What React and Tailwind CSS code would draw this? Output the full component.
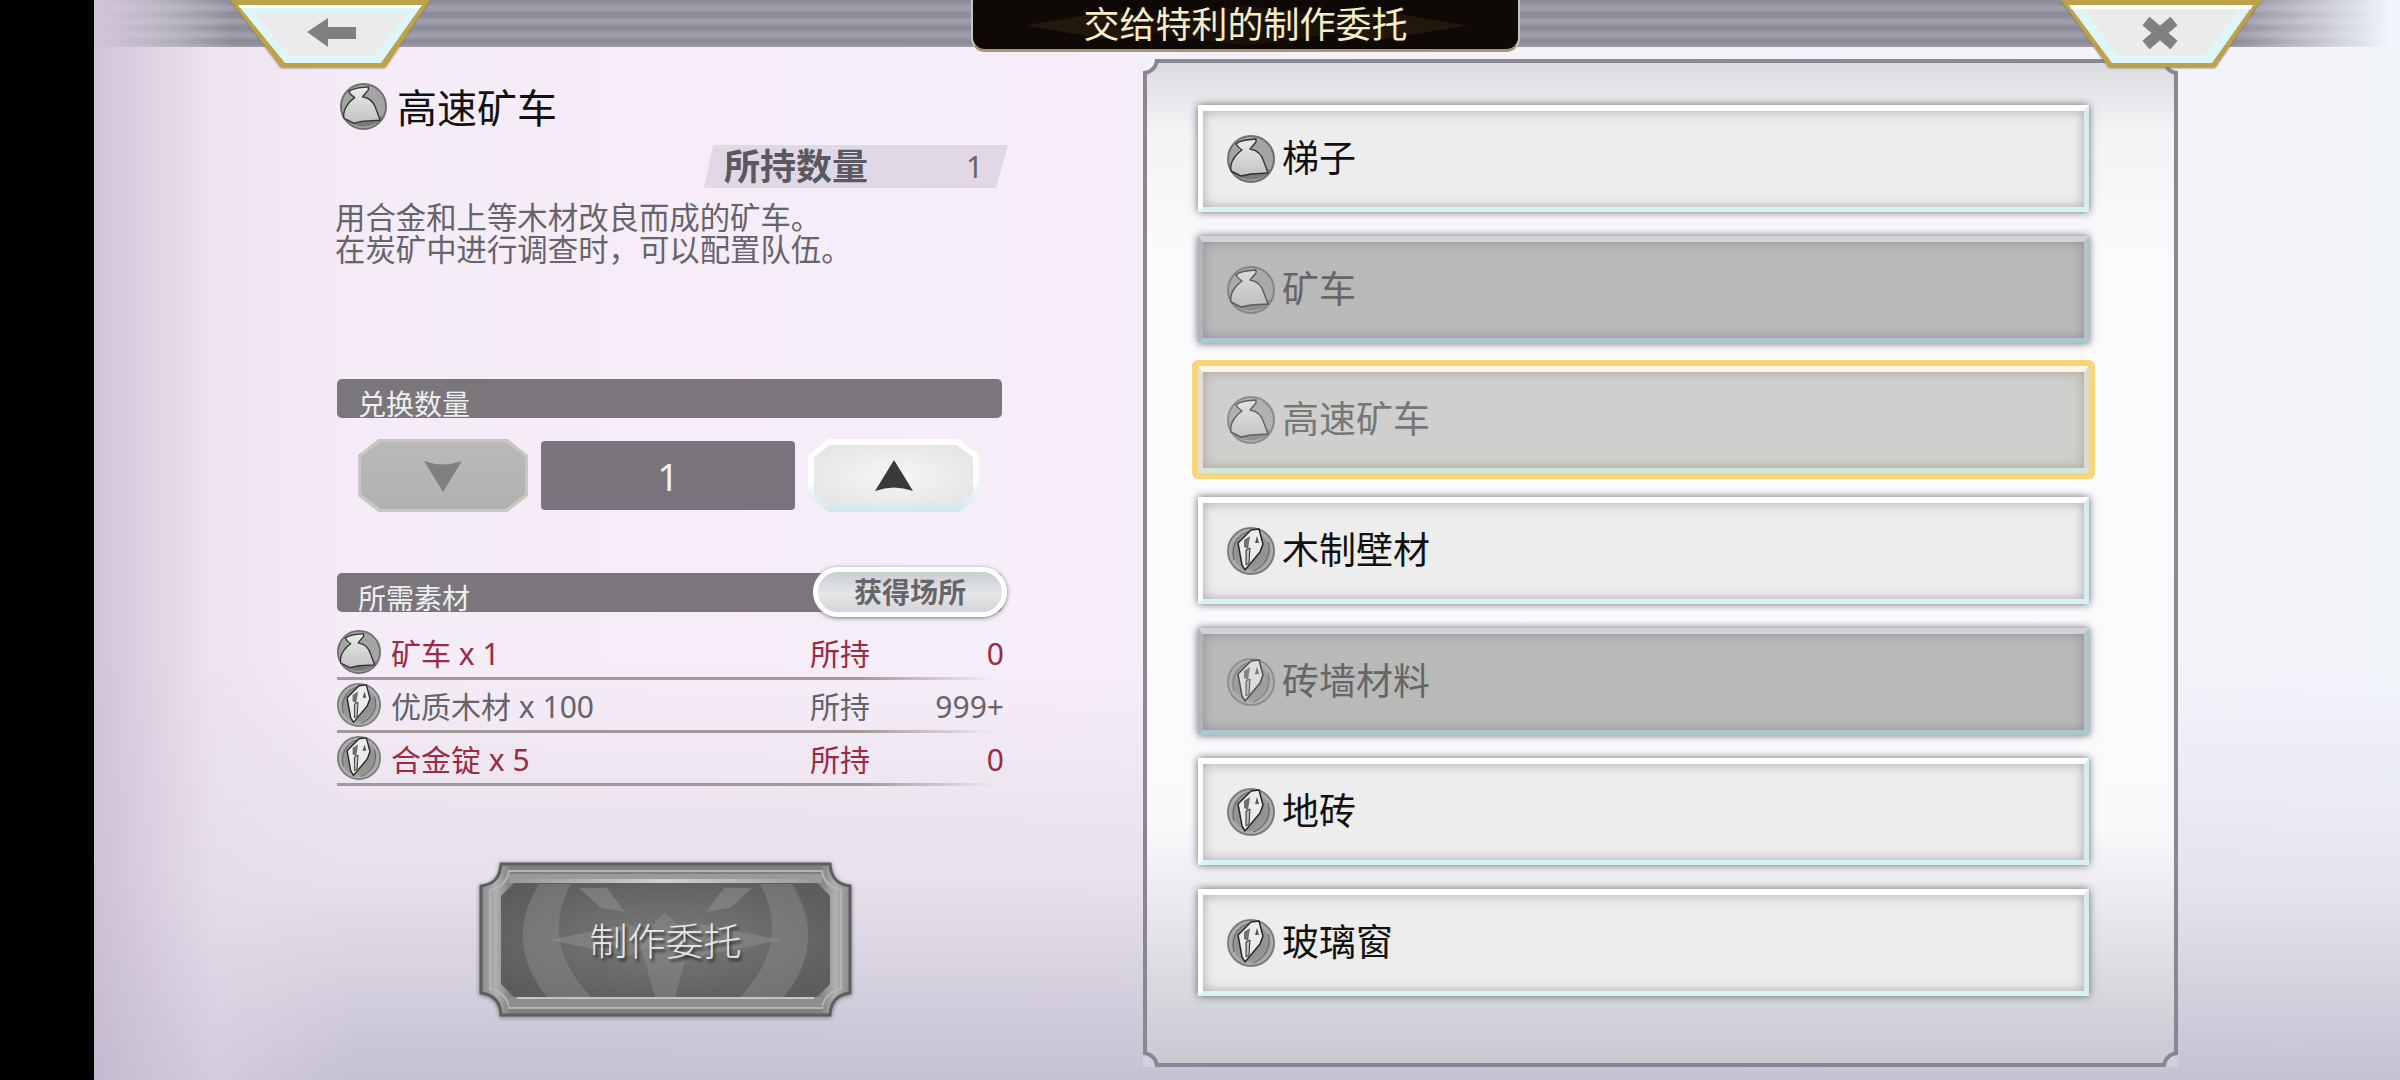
const recipes = [
  { name: "梯子", icon: "bag", state: "normal" },
  { name: "矿车", icon: "bag", state: "disabled" },
  { name: "高速矿车", icon: "bag", state: "selected" },
  { name: "木制壁材", icon: "crystal", state: "normal" },
  { name: "砖墙材料", icon: "crystal", state: "disabled" },
  { name: "地砖", icon: "crystal", state: "normal" },
  { name: "玻璃窗", icon: "crystal", state: "normal" },
];

const materials = [
  { name: "矿车 x 1", icon: "bag", owned: "0", short: true },
  { name: "优质木材 x 100", icon: "crystal", owned: "999+", short: false },
  { name: "合金锭 x 5", icon: "crystal", owned: "0", short: true },
];

const rowStyles = {
  normal:
    "bg-[#ededed] border-t-white border-l-white border-r-[#d5edf1] border-b-[#d6f3f6] shadow-[0_0_8px_#66666c,inset_0_0_12px_#a8a8ae] text-[#111]",
  disabled:
    "bg-[#b9b9b9] border-t-[#d2d2d6] border-l-[#b4b2ba] border-r-[#b0c4ca] border-b-[#a9c7cf] shadow-[0_0_8px_#66666c,inset_0_0_12px_#8e8e94] text-[#666]",
  selected:
    "bg-[#cfcfcd] border-t-[#fdf5e6] border-l-[#e6dfd0] border-r-[#dcdccc] border-b-[#d2e6da] shadow-[0_0_0_6px_#f6d675,inset_0_0_12px_#a8a498] rounded-[2px] text-[#777]",
};

function BagIcon({ className }) {
  return (
    <svg viewBox="0 0 48 48" className={className}>
      <defs>
        <linearGradient id="bagFill" x1="0" y1="0" x2="0" y2="1">
          <stop offset="0" stopColor="#ececec" />
          <stop offset="1" stopColor="#c2c2c2" />
        </linearGradient>
      </defs>
      <circle cx="24" cy="24" r="23" fill="#a4a4a4" stroke="#707070" strokeWidth="2" />
      <path d="M4 34 C12 48 36 48 44 34 L24 36 Z" fill="#7a7a7a" />
      <path
        d="M9 9 C12 6 15 6 19 5 L29 4 L29 7 L23 14 C30 15 35 20 37 27 L41 38 L24 39 L14 41 L4 36 C3 30 5 26 7 23 C9 20 12 17 15 15 C12 13 10 11 9 9 Z"
        fill="url(#bagFill)"
        stroke="#333"
        strokeWidth="1.4"
        strokeLinejoin="round"
      />
    </svg>
  );
}

function CrystalIcon({ className }) {
  return (
    <svg viewBox="0 0 48 48" className={className}>
      <defs>
        <radialGradient id="crystalFill" cx="0.5" cy="0.5" r="0.5">
          <stop offset="0" stopColor="#8a8a8a" />
          <stop offset="0.75" stopColor="#969696" />
          <stop offset="1" stopColor="#bcbcbc" />
        </radialGradient>
      </defs>
      <circle cx="24" cy="24" r="23" fill="url(#crystalFill)" stroke="#7c7c7c" strokeWidth="2" />
      <path d="M7 33 C3 18 12 6 24 4" fill="none" stroke="#5a5a5a" strokeWidth="1" />
      <path d="M41 15 C45 28 37 40 26 44" fill="none" stroke="#5a5a5a" strokeWidth="1" />
      <polygon
        points="24,3 32,2 36,17 33,25 18,43 15,38 11,16"
        fill="#ececec"
        stroke="#262626"
        strokeWidth="1.5"
        strokeLinejoin="round"
      />
      <polygon points="17,13 23,9 21,22 17,20" fill="#6e6e6e" />
      <polygon points="30,9 32,16 28,16" fill="#555" />
      <polygon points="19,23 23,21 22,36 19,38" fill="#bcbcbc" stroke="#333" strokeWidth="1" />
    </svg>
  );
}

function ItemIcon({ type, className }) {
  return type === "bag" ? <BagIcon className={className} /> : <CrystalIcon className={className} />;
}

function BackButton() {
  return (
    <svg viewBox="0 0 200 68" className="w-[200px] h-[68px] -ml-[1px] shrink-0 relative drop-shadow-[0_1px_1px_#8a8060]">
      <polygon points="0,0 200,0 155,67 51,67" fill="#bda24a" />
      <polygon points="8,5 192,5 151,63 55,63" fill="#dff6f8" />
      <polygon points="8,5 192,5 190,8 10,8" fill="#ffffff" />
      <polygon points="23,13 177,13 145,55 60,55" fill="#ebebeb" />
      <polygon points="77,32 98,18 98,27 126,27 126,39 98,39 98,47" fill="#808080" />
    </svg>
  );
}

function CloseButton() {
  return (
    <svg viewBox="0 0 202 68" className="w-[202px] h-[68px] shrink-0 relative drop-shadow-[0_1px_1px_#8a8060]">
      <polygon points="1,0 201,0 155,67 49,67" fill="#bda24a" />
      <polygon points="9,5 193,5 152,63 52,63" fill="#dff6f8" />
      <polygon points="9,5 193,5 191,9 11,9" fill="#ffffff" />
      <polygon points="24,10 178,10 145,55 58,55" fill="#ebebeb" />
      <path d="M86 21 L114 45 M114 21 L86 45" stroke="#808080" strokeWidth="11" />
    </svg>
  );
}

function TitlePlate() {
  return (
    <div className="relative w-[549px] h-[52px] shrink-0 rounded-b-[14px] bg-[#0e0905] border-x-[2px] border-b-[3px] border-x-[#c9c4b8] border-b-[#a8957a] flex items-center justify-center overflow-hidden">
      <svg viewBox="0 0 549 52" className="absolute inset-0 w-full h-full">
        <polygon points="40,27 130,12 230,27 130,42" fill="#22170b" />
        <polygon points="320,27 420,12 510,27 420,42" fill="#22170b" />
        <polygon points="110,27 275,6 440,27 275,48" fill="#1a1109" />
      </svg>
      <span className="relative text-[36px] leading-[40px] text-[#f6eecb]">交给特利的制作委托</span>
    </div>
  );
}

function BarHeading({ children, pill }) {
  return (
    <div className="relative h-[39px] w-[665px] rounded-[5px] bg-[#7a767c]">
      <div className="pl-[21px] pt-[11px] text-[28px] leading-[28px] text-[#efefef]">{children}</div>
      {pill}
    </div>
  );
}

function Stepper() {
  return (
    <div className="flex items-center gap-[13px] ml-[21px] mt-[21px] h-[73px]">
      <div className="w-[170px] h-[73px] bg-[#c9c8c0] flex items-center justify-center [clip-path:polygon(12%_0,88%_0,100%_22%,100%_78%,88%_100%,12%_100%,0_78%,0_22%)]">
        <div className="w-[164px] h-[67px] bg-[linear-gradient(#b9b9b9,#b1b1b1)] flex items-center justify-center [clip-path:polygon(12%_0,88%_0,100%_22%,100%_78%,88%_100%,12%_100%,0_78%,0_22%)]">
          <svg viewBox="0 0 38 32" className="w-[38px] h-[32px]">
            <path d="M0 1 Q19 8 38 1 L19 32 Z" fill="#808080" />
          </svg>
        </div>
      </div>
      <div className="w-[254px] h-[69px] rounded-[4px] bg-[#7a757c] flex items-center justify-center text-[38px] text-[#f0f0f0] pt-[2px]">1</div>
      <div className="w-[171px] h-[73px] bg-[linear-gradient(#ffffff,#ffffff_55%,#cfe6ee)] flex items-center justify-center [clip-path:polygon(12%_0,88%_0,100%_22%,100%_78%,88%_100%,12%_100%,0_78%,0_22%)]">
        <div className="w-[159px] h-[61px] bg-[radial-gradient(ellipse_at_center,#f6f6f8,#e2e2e4)] flex items-center justify-center [clip-path:polygon(10%_0,90%_0,100%_20%,100%_80%,90%_100%,10%_100%,0_80%,0_20%)]">
          <svg viewBox="0 0 38 32" className="w-[38px] h-[32px]">
            <path d="M19 0 L38 31 Q19 24 0 31 Z" fill="#3a3a3c" />
          </svg>
        </div>
      </div>
    </div>
  );
}

function MaterialRow({ item }) {
  const color = item.short ? "text-[#9b2a45]" : "text-[#66636a]";
  return (
    <div className="w-[667px]">
      <div className={`h-[50px] flex items-center text-[30px] leading-[36px] ${color}`}>
        <ItemIcon type={item.icon} className="w-[44px] h-[44px] shrink-0" />
        <span className="ml-[10px] pt-[4px] flex-1">{item.name}</span>
        <span className="pt-[4px] w-[60px]">所持</span>
        <span className="pt-[4px] w-[134px] text-right">{item.owned}</span>
      </div>
      <div className="h-[3px] w-[657px] bg-[linear-gradient(to_right,#a29a9a,#a29a9a_80%,transparent)]" />
    </div>
  );
}

function CraftButton() {
  return (
    <div className="relative w-[373px] h-[155px] ml-[142px] mt-[76px] flex items-center justify-center">
      <svg viewBox="0 0 373 155" className="absolute inset-0 w-full h-full drop-shadow-[0_1px_2px_#777]">
        <defs>
          <radialGradient id="craftFace" cx="0.5" cy="0.5" r="0.62">
            <stop offset="0" stopColor="#7a7a7a" />
            <stop offset="1" stopColor="#5c5c5c" />
          </radialGradient>
          <linearGradient id="craftEdge" x1="0" y1="0" x2="1" y2="0">
            <stop offset="0" stopColor="#8a8a8a" />
            <stop offset="0.04" stopColor="#b0b0b0" />
            <stop offset="0.08" stopColor="#808080" />
            <stop offset="0.92" stopColor="#808080" />
            <stop offset="0.96" stopColor="#b0b0b0" />
            <stop offset="1" stopColor="#8a8a8a" />
          </linearGradient>
          <linearGradient id="craftBand" x1="0" y1="0" x2="1" y2="0">
            <stop offset="0" stopColor="#9c9c9c" />
            <stop offset="0.5" stopColor="#d0d0d0" />
            <stop offset="1" stopColor="#9c9c9c" />
          </linearGradient>
        </defs>
        <path
          d="M22 2 H351 Q352 22 371 24 V131 Q352 133 351 153 H22 Q21 133 2 131 V24 Q21 22 22 2 Z"
          fill="url(#craftEdge)"
          stroke="#5e5e62"
          strokeWidth="3"
        />
        <path d="M30 9 H343 Q345 24 362 28 V127 Q345 131 343 146 H30 Q28 131 11 127 V28 Q28 24 30 9 Z" fill="none" stroke="#b4b4b4" strokeWidth="2" />
        <polygon points="35,21 338,21 351,34 351,122 338,135 35,135 22,122 22,34" fill="url(#craftFace)" />
        <rect x="30" y="12" width="313" height="9" fill="#9a9a9a" />
        <rect x="38" y="17" width="297" height="4" fill="url(#craftBand)" />
        <rect x="30" y="135" width="313" height="10" fill="#8e8e8e" />
        <rect x="38" y="135" width="297" height="2" fill="#c4c4c4" />
        <path d="M60 22 Q24 80 68 135 L112 135 Q60 80 92 22 Z" fill="#949494" opacity="0.4" />
        <path d="M313 22 Q349 80 305 135 L261 135 Q313 80 281 22 Z" fill="#949494" opacity="0.4" />
        <polygon points="70,78 150,62 186,78 222,62 302,78 222,94 186,78 150,94" fill="#949494" opacity="0.45" />
        <polygon points="100,26 128,26 146,50 122,46" fill="#949494" opacity="0.5" />
        <polygon points="273,26 245,26 227,50 251,46" fill="#949494" opacity="0.5" />
        <polygon points="186,50 212,78 196,135 176,135 160,78" fill="#949494" opacity="0.4" />
      </svg>
      <span className="relative text-[38px] leading-[44px] font-light text-[#e8e8e8] [text-shadow:2px_3px_3px_#2c2c2c]">制作委托</span>
    </div>
  );
}

function RecipeRow({ item }) {
  return (
    <div
      className={`h-[107px] flex items-center border-t-[6px] border-x-[5px] border-b-[5px] pl-[24px] ${rowStyles[item.state]}`}
    >
      <ItemIcon
        type={item.icon}
        className={`w-[48px] h-[48px] shrink-0 ${item.state === "normal" ? "" : "opacity-70"}`}
      />
      <span className="ml-[7px] pb-[2px] text-[37px] leading-[44px]">{item.name}</span>
    </div>
  );
}

export default function App() {
  return (
    <div className="w-[2400px] h-[1080px] flex overflow-hidden bg-black font-['Noto_Sans','Noto_Sans_CJK_SC',sans-serif]">
      <aside className="w-[94px] shrink-0 bg-black" />
      <main className="flex-1 bg-[linear-gradient(to_right,rgba(196,184,206,0.75),rgba(228,218,234,0.45)_120px,transparent_260px),linear-gradient(to_top,rgba(192,188,206,0.9),rgba(214,210,224,0.45)_200px,transparent_420px),linear-gradient(to_right,#f4ebf6,#f6eef8_45%,#f2f5fa)]">
        <header className="relative z-10 h-[47px] flex items-start pl-[137px]">
          <div className="absolute inset-0 bg-[repeating-linear-gradient(#8a8a98_0,#8e8e9c_3px,#a0a0ac_7px,#9c9ca8_10px,#8a8a98_13.5px)] [mask-image:linear-gradient(to_right,transparent,black_137px,black_2139px,transparent_2296px)]" />
          <BackButton />
          <div className="relative ml-[541px]">
            <TitlePlate />
          </div>
          <div className="ml-[540px]">
            <CloseButton />
          </div>
        </header>

        <div className="flex items-start pl-[243px]">
          <section className="w-[806px] shrink-0">
            <div className="flex items-center h-[47px] mt-[36px] ml-[3px]">
              <BagIcon className="w-[47px] h-[47px] shrink-0" />
              <h1 className="ml-[10px] pt-[2px] text-[40px] leading-[47px] text-[#111]">高速矿车</h1>
            </div>
            <div className="mt-[15px] ml-[367px] w-[304px] h-[43px] relative flex items-center">
              <div className="absolute inset-0 bg-[#e0d8e4] [clip-path:polygon(3%_0,100%_0,96%_100%,0_100%)]" />
              <span className="relative ml-[20px] text-[36px] leading-[43px] font-bold text-[#5a5860]">所持数量</span>
              <span className="relative ml-[98px] text-[30px] leading-[43px] text-[#666]">1</span>
            </div>
            <p className="mt-[14px] -ml-[2px] text-[30.4px] leading-[32px] text-[#66646a]">
              用合金和上等木材改良而成的矿车。
              <br />
              在炭矿中进行调查时，可以配置队伍。
            </p>
            <div className="mt-[113px]">
              <BarHeading>兑换数量</BarHeading>
            </div>
            <Stepper />
            <div className="mt-[61px]">
              <BarHeading
                pill={
                  <div className="absolute -right-[5px] -top-[6px] w-[194px] h-[50px] rounded-full border-[5px] border-white bg-[linear-gradient(#c9cdd2,#e6e6e8_55%,#d4d4d8)] shadow-[0_1px_4px_#77777c] flex items-center justify-center text-[28px] leading-[34px] font-bold text-[#66666a]">
                    获得场所
                  </div>
                }
              >
                所需素材
              </BarHeading>
            </div>
            <div className="mt-[15px]">
              {materials.map((item) => (
                <MaterialRow key={item.name} item={item} />
              ))}
            </div>
            <CraftButton />
          </section>

          <section className="relative w-[1035px] h-[1008px] mt-[12px] shrink-0 border-[4px] border-[#8b8594] bg-[linear-gradient(#dcdce0,#f4f4f7_70px,#fbfbfe_200px,#fafafd_760px,#c9c9d1)] pt-[42px] pl-[51px]">
            <div className="absolute -left-[4px] -top-[4px] w-[16px] h-[16px] rounded-br-[16px] border-r-[4px] border-b-[4px] border-[#8b8594] bg-[#f4f1f8]" />
            <div className="absolute -right-[4px] -top-[4px] w-[16px] h-[16px] rounded-bl-[16px] border-l-[4px] border-b-[4px] border-[#8b8594] bg-[#f2f5fa]" />
            <div className="absolute -left-[4px] -bottom-[4px] w-[16px] h-[16px] rounded-tr-[16px] border-r-[4px] border-t-[4px] border-[#8b8594] bg-[#d4d0dc]" />
            <div className="absolute -right-[4px] -bottom-[4px] w-[16px] h-[16px] rounded-tl-[16px] border-l-[4px] border-t-[4px] border-[#8b8594] bg-[#d0d0dc]" />
            <div className="w-[891px] flex flex-col gap-[23.67px]">
              {recipes.map((item) => (
                <RecipeRow key={item.name} item={item} />
              ))}
            </div>
          </section>
        </div>
      </main>
    </div>
  );
}
